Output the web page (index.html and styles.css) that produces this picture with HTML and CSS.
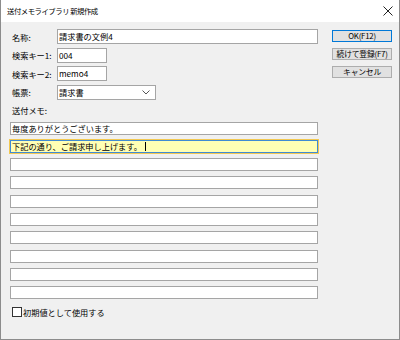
FILE: index.html
```html
<!DOCTYPE html>
<html lang="ja">
  <head>
    <meta charset="UTF-8" />
    <title>送付メモライブラリ 新規作成</title>
    <link rel="stylesheet" href="styles.css">
  </head>
  <body>
    <div class="window">
      <div class="titlebar">
        <span class="title">送付メモライブラリ 新規作成</span>
        <svg class="close" width="10" height="10" viewBox="0 0 10 10">
          <path d="M0.5 0.5 L9.5 9.5 M9.5 0.5 L0.5 9.5" stroke="#222" stroke-width="1" fill="none" />
        </svg>
      </div>
      <div class="content">
        <div class="main">
          <div class="fields">
            <div class="field">
              <span class="label">名称:</span>
              <div class="input wide">請求書の文例4</div>
            </div>
            <div class="field">
              <span class="label">検索キー1:</span>
              <div class="input short">004</div>
            </div>
            <div class="field">
              <span class="label">検索キー2:</span>
              <div class="input short">memo4</div>
            </div>
            <div class="field">
              <span class="label">帳票:</span>
              <div class="input select">
                <span>請求書</span>
                <svg class="chevron" width="8" height="5" viewBox="0 0 8 5">
                  <path d="M0.5 0.5 L4 4 L7.5 0.5" stroke="#555" stroke-width="1" fill="none" />
                </svg>
              </div>
            </div>
          </div>
          <div class="memo-label">送付メモ:</div>
          <div class="memos">
            <div class="memo">毎度ありがとうございます。</div>
            <div class="memo focused">下記の通り、ご請求申し上げます。<span class="caret"></span></div>
            <div class="memo"></div>
            <div class="memo"></div>
            <div class="memo"></div>
            <div class="memo"></div>
            <div class="memo"></div>
            <div class="memo"></div>
            <div class="memo"></div>
            <div class="memo"></div>
          </div>
          <label class="check"><span class="box"></span>初期値として使用する</label>
        </div>
        <div class="buttons">
          <div class="button default">OK(F12)</div>
          <div class="button">続けて登録(F7)</div>
          <div class="button">キャンセル</div>
        </div>
      </div>
    </div>
  </body>
</html>
```

FILE: styles.css
```css
* {
  box-sizing: border-box;
}
body {
  margin: 0;
  font-family: "Noto Sans CJK JP", "Noto Sans", sans-serif;
  font-size: 8.2px;
  color: #000;
}
.window {
  width: 400px;
  height: 340px;
  display: flex;
  flex-direction: column;
  background: #f0f0f0;
  border: 1px solid #8c8c8c;
  border-top: none;
}
.titlebar {
  height: 22px;
  background: #fff;
  display: flex;
  align-items: center;
  justify-content: space-between;
  padding: 0 6px 0 6px;
}
.title {
  font-size: 7.4px;
  letter-spacing: -0.5px;
  margin-top: -1px;
}
.close {
  margin-top: -1px;
}
.content {
  flex: 1;
  display: flex;
  padding: 7px 7px 0 9px;
}
.main {
  width: 309px;
  display: flex;
  flex-direction: column;
}
.fields {
  display: flex;
  flex-direction: column;
  gap: 3.5px;
}
.field {
  display: flex;
  align-items: center;
  height: 15px;
}
.label {
  width: 47px;
  padding-left: 2px;
}
.input {
  height: 15px;
  background: #fff;
  border: 1px solid #a5a5a5;
  display: flex;
  align-items: center;
  padding-left: 1px;
  line-height: 1;
}
.wide {
  flex: 1;
}
.short {
  width: 50px;
}
.select {
  width: 99px;
  justify-content: space-between;
  padding-right: 5px;
}
.memo-label {
  margin-top: 4px;
  line-height: 12px;
  padding-left: 2px;
}
.memos {
  margin-top: 6px;
  display: flex;
  flex-direction: column;
  gap: 5.33px;
}
.memo {
  height: 13px;
  background: #fff;
  border: 1px solid #a5a5a5;
  display: flex;
  align-items: center;
  padding-left: 1px;
  line-height: 1;
}
.memo.focused {
  background: #ffffb4;
  border-color: #3f8bd4;
  box-shadow: 0 0 0 1px #f2c852;
}
.caret {
  display: inline-block;
  width: 1px;
  height: 9px;
  background: #000;
  margin-left: 3px;
}
.check {
  margin-top: 7px;
  display: flex;
  align-items: center;
  padding-left: 2px;
}
.box {
  width: 10px;
  height: 10px;
  background: #fff;
  border: 1px solid #333;
  margin-right: 1px;
}
.buttons {
  margin-left: 14px;
  width: 60px;
  display: flex;
  flex-direction: column;
  gap: 6px;
  padding-top: 1px;
}
.button {
  height: 12px;
  background: #e1e1e1;
  border: 1px solid #adadad;
  display: flex;
  align-items: center;
  justify-content: center;
  line-height: 1;
  white-space: nowrap;
  font-size: 7.8px;
  letter-spacing: -0.2px;
}
.button.default {
  border-color: #0078d7;
}
```
